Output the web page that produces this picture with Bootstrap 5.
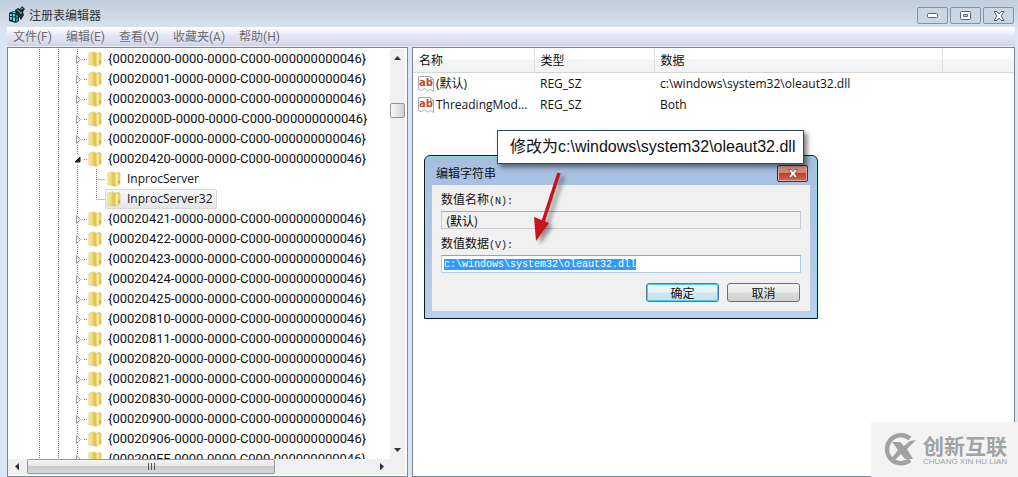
<!DOCTYPE html>
<html lang="zh-CN">
<head>
<meta charset="utf-8">
<meta name="viewport" content="width=device-width, initial-scale=1">
<title>注册表编辑器</title>
<link rel="stylesheet" href="https://cdn.jsdelivr.net/npm/bootstrap@5.3.0/dist/css/bootstrap.min.css">
<style>
  body { font: 12px/20px "Open Sans", "Noto Sans CJK SC", sans-serif; color: #111; background: #d9e6f3; }
  .app-window { padding: 0 3px 0 7px; background: linear-gradient(#c1cedb, #d6e2ed 27px, #d9e6f3 28px); }
  .titlebar { height: 27px; padding: 5px 1px 0 0; color: #333; }
  .titlebar h1 { font-size: 12px; line-height: 22px; }
  .app-icon { margin: 1px 3px 0 1px; }
  .caption-group { gap: 2px; padding-top: 2px; }
  .caption-btn { width: 31px; height: 17px; border: 1px solid #8492a6; border-radius: 2px; background: #c9d6e3; }
  .menubar { height: 20px; background: linear-gradient(#fff 0, #f4f6fc 4px, #e4e7f5 8px, #d7daec 17px, #c3c7d8 18px, #e8ebf5 19px); padding-left: 6px; gap: 14px; }
  .menubar a { color: #6d6d72; font-family: Roboto, "Noto Sans CJK SC", sans-serif; }
  .pane { background: #fff; border: 1px solid #7f868f; }
  .tree-pane { flex: 0 0 401px; padding: 1px 2px 1px 0; }
  .tree-list li { height: 20px; white-space: nowrap; }
  .tree-item { height: 20px; padding: 0 3px 0 1px; border: 1px solid transparent; border-radius: 2px; line-height: 18px; }
  .tree-item.selected { background: linear-gradient(#f8f8f8, #e6e6e6); border-color: #d9d9d9; }
  .tree-text { padding-left: 6px; }
  .tree-key { font: 13px/20px Roboto, sans-serif; }
  .vbar { flex: 0 0 15px; background: #f0f0f0; }
  .vthumb { height: 15px; margin-top: 38px; border: 1px solid #979797; border-radius: 2px; background: linear-gradient(90deg, #f8f8f8, #d0d0d3); }
  .hbar { height: 16px; background: #f0f0f0; padding-right: 15px; }
  .hthumb { width: 248px; height: 15px; border: 1px solid #979797; border-radius: 2px; background: linear-gradient(#f5f5f5, #e6e6e7 45%, #c9cacc 50%, #d8d8da); }
  .value-table { table-layout: fixed; width: 100%; }
  .value-table th { height: 24px; padding: 2px 6px 0; font-weight: 400; background: linear-gradient(#fff 45%, #f4f5f6 50%, #f1f2f4); border-right: 1px solid #dfe2e6; border-bottom: 1px solid #d5d5d5; }
  .value-table th:last-child { border-right: 0; }
  .value-table td { height: 21px; padding: 0 6px; white-space: nowrap; }
  .value-table td:first-child { padding: 0 0 0 5px; }
  .value-table tbody::before { content: ""; display: block; height: 1px; }
  .value-icon { margin-right: 2px; }
  .edit-dialog { left: 424px; top: 155px; width: 394px; padding: 0 7px 7px; border: 1px solid #101b28; border-radius: 6px 6px 0 0; background: linear-gradient(#a6bfdf, #adc5e4 60px, #b9d1ea); box-shadow: inset 0 0 0 1px #8fdcef; font: 12px/16px "Liberation Mono", "Noto Sans CJK SC", monospace; }
  .dialog-title { height: 29px; padding: 5px 2px 0 4px; }
  .dialog-title h2 { font: 12px/24px "Noto Sans CJK SC", sans-serif; }
  .dialog-close { width: 31px; height: 17px; margin-top: 4px; border: 1px solid #5a2420; border-radius: 2px; background: linear-gradient(#e9a99b, #d57e6c 45%, #bd4029 50%, #d06a50); box-shadow: inset 0 0 0 1px #e7aca0; }
  .dialog-body { height: 126px; padding: 8px 9px 0; background: #f0f0f0; }
  .dialog-body label { line-height: 16px; margin-bottom: 1px; }
  .dialog-body label span { font-size: 10px; }
  .field { height: 18px; padding: 0 2px; border: 1px solid #c9cbd0; border-radius: 0; font: 12px/16px "Noto Sans CJK SC", sans-serif; }
  .field[readonly] { background: #f0f0f0; padding-left: 4px; border-top-color: #aaa; margin-bottom: 8px; }
  .field-value { font: 10px/14px "Liberation Mono", monospace; border-color: #7aaed0 #a9cfe8 #b5cfe7; color: #111; }
  .field:focus { outline: 0; box-shadow: none; }
  .field-value::selection { background: #3399ff; color: #fff; }
  .dlg-actions { padding: 10px 1px 0 0; }
  .dlg-btn { width: 73px; height: 19px; border: 1px solid #707070; border-radius: 3px; background: linear-gradient(#f3f3f3, #ebebeb 48%, #dcdcdc 52%, #cfcfcf); font: 12px/15px "Noto Sans CJK SC", sans-serif; color: #111; }
  .dlg-btn.default { border-color: #3c7fb1; box-shadow: inset 0 0 0 1px #48d0f2; background: linear-gradient(#eef8fc, #e2f2f8 48%, #d0e6ee 52%, #cbe1e9); }
  .callout-note { left: 497px; top: 130px; padding: 0 8px 0 12px; border: 1px solid #2d4d62; background: #fff; box-shadow: 3px 3px 5px #0008; font: 16px/32px "Liberation Sans", "Noto Sans CJK SC", sans-serif; white-space: nowrap; }
  .callout-arrow { left: 530px; top: 166px; filter: drop-shadow(4px 3px 2px #0006); }
  .watermark { right: 0; bottom: 0; width: 147px; height: 55px; padding-left: 12px; gap: 5px; background: #f3f3f3; color: #a2a2a2; }
  .watermark strong { font: 700 21px/24px "Noto Sans CJK SC", sans-serif; }
  .watermark small { font: 8px/10px "Liberation Sans", sans-serif; }
</style>
</head>
<body>
<svg width="0" height="0" class="position-absolute" aria-hidden="true">
  <defs>
    <linearGradient id="gold" x2="1"><stop stop-color="#f8eea0"/><stop offset="1" stop-color="#dfc14a"/></linearGradient>
    <symbol id="folder" viewBox="0 0 14 16">
      <path d="M7 2.500l5-1q1 0 1 1V13l-5 2z" fill="#ecd565" stroke="#d8bd55" stroke-width=".6"/>
      <path d="M8.500 3l2-.5v11l-2 .8z" fill="#fff3b4"/>
      <path d="M.8 2L6 .8l2.200 1.400v13.200L5.500 14.600.8 14z" fill="url(#gold)" stroke="#dfca70" stroke-width=".6"/>
      <path d="M5.800 1.800v12.400" stroke="#dcc25a" stroke-width=".7"/>
      <path d="M12 9.500v2.500" stroke="#8a9a62" stroke-width=".8"/>
    </symbol>
    <symbol id="guides" viewBox="0 0 69 20"><path d="M31.500 0v20M50.500 0v20" stroke="#777" stroke-dasharray="1 1"/></symbol>
    <symbol id="closed" viewBox="0 0 11 20" overflow="visible"><path d="M.5 0v5M.5 16v4M7 10.500h4" stroke="#888" stroke-dasharray="1 1"/><path d="M-.5 6.500v8l4-4z" fill="#fff" stroke="#999"/></symbol>
    <symbol id="open" viewBox="0 0 11 20" overflow="visible"><path d="M.5 0v5M.5 16v4M7 10.500h4" stroke="#888" stroke-dasharray="1 1"/><path d="M3 8v5h-5z" fill="#222" stroke="#222"/></symbol>
    <symbol id="child" viewBox="0 0 28 20"><path d="M.5 0v20M19.500 0v20M19.500 10.500h9" stroke="#888" stroke-dasharray="1 1" fill="none"/></symbol>
    <symbol id="childend" viewBox="0 0 28 20"><path d="M.5 0v20M19.500 0v10M19.500 10.500h9" stroke="#888" stroke-dasharray="1 1" fill="none"/></symbol>
    <symbol id="string" viewBox="0 0 16 16">
      <path d="M.5.5h12l3 3v12l-3-2-3 1.500-3-2.500-3 2-3-1z" fill="#fff" stroke="#a4acb4"/><path d="M12.500.5v3h3" fill="#ddd" stroke="#a4acb4"/>
      <text x="1" y="10" font-family="DejaVu Sans" font-size="10" font-weight="700" fill="#c5452b">ab</text>
    </symbol>
  </defs>
</svg>

<div class="app-window vh-100 d-flex flex-column overflow-hidden position-relative">
  <header class="titlebar d-flex align-items-start">
    <svg width="18" height="18" viewBox="0 0 18 18" class="app-icon" aria-hidden="true">
      <path d="M1 7l4-2 6 1v9l-3 2-7-2z" fill="#16313a"/>
      <path d="M2 8h2v2H2zM5 8h2v2.500H5zM2 11h2v2.500H2zM5 11.500h2V15H5zM5 5.500l3 .8-1 1-3-.8z" fill="#5fdde0"/>
      <path d="M8 9l2-1v3l-2 1zM8 13l2-1v2.500L8 16z" fill="#1d9ba4"/>
      <path d="M7 4l3-2 2 1 2-3 3 3-2 3 1 3-3 5-2-3-3-3z" fill="#1b2c31"/><path d="M9 4l2 1 2 3M13 3l2-1M12 6l2 1" stroke="#88cdd0" fill="none" stroke-width=".8"/>
    </svg>
    <h1 class="m-0 flex-grow-1 fw-normal">注册表编辑器</h1>
    <div class="caption-group d-flex">
      <button class="caption-btn p-0 d-flex align-items-center justify-content-center" aria-label="最小化"><svg width="12" height="6"><rect x=".5" y=".5" width="10" height="4" rx="1" fill="#fff" stroke="#5a6270"/></svg></button>
      <button class="caption-btn p-0 d-flex align-items-center justify-content-center" aria-label="最大化"><svg width="11" height="9"><rect x=".5" y=".5" width="10" height="8" rx="1" fill="#fff" stroke="#5a6270"/><path d="M3.500 3.500h4v2h-4z" fill="#c9d6e3" stroke="#5a6270"/></svg></button>
      <button class="caption-btn p-0 d-flex align-items-center justify-content-center" aria-label="关闭"><svg width="12" height="10" viewBox="0 0 12 10"><path d="M1 .5h3L6 3 8 .5h3L8 5l3 4.500H8L6 7 4 9.500H1L4 5z" fill="#fff" stroke="#5a6270"/></svg></button>
    </div>
  </header>

  <nav class="menubar d-flex">
    <a class="text-decoration-none" href="#">文件(F)</a>
    <a class="text-decoration-none" href="#">编辑(E)</a>
    <a class="text-decoration-none" href="#">查看(V)</a>
    <a class="text-decoration-none" href="#">收藏夹(A)</a>
    <a class="text-decoration-none" href="#">帮助(H)</a>
  </nav>

  <main class="d-flex flex-grow-1 gap-1 overflow-hidden">
    <section class="pane tree-pane d-flex flex-column overflow-hidden">
      <div class="d-flex flex-grow-1 overflow-hidden">
        <ul class="tree-list list-unstyled m-0 flex-grow-1 overflow-hidden" id="tree"></ul>
        <div class="vbar d-flex flex-column">
          <svg width="15" height="16"><path d="M4 11l3.500-4L11 11z" fill="#333"/></svg>
          <div class="vthumb"></div>
          <svg width="15" height="16" class="mt-auto"><path d="M4 5l3.500 4L11 5z" fill="#333"/></svg>
        </div>
      </div>
      <div class="hbar d-flex">
        <svg width="19" height="16"><path d="M11 4L7 7.500l4 4z" fill="#333"/></svg>
        <div class="hthumb d-flex align-items-center justify-content-center"><svg width="9" height="7"><path d="M1.500 0v7M4.500 0v7M7.500 0v7" stroke="#555"/></svg></div>
        <svg width="15" height="16" class="ms-auto"><path d="M5 4l4 3.500-4 4z" fill="#333"/></svg>
      </div>
    </section>

    <section class="pane flex-grow-1 overflow-hidden">
      <table class="value-table">
        <colgroup><col width="121"><col width="120"><col width="288"><col></colgroup>
        <thead><tr><th>名称</th><th>类型</th><th>数据</th><th></th></tr></thead>
        <tbody>
          <tr><td><div class="d-flex align-items-center"><svg width="16" height="16" class="value-icon"><use href="#string"/></svg>(默认)</div></td><td>REG_SZ</td><td>c:\windows\system32\oleaut32.dll</td><td></td></tr>
          <tr><td><div class="d-flex align-items-center"><svg width="16" height="16" class="value-icon"><use href="#string"/></svg>ThreadingMod...</div></td><td>REG_SZ</td><td>Both</td><td></td></tr>
        </tbody>
      </table>
    </section>
  </main>

  <form class="edit-dialog position-absolute" onsubmit="return false">
    <div class="dialog-title d-flex justify-content-between">
      <h2 class="m-0">编辑字符串</h2>
      <button type="button" class="dialog-close p-0 d-flex align-items-center justify-content-center" aria-label="关闭"><svg width="12" height="9" viewBox="0 0 12 10"><path d="M1 .5h3L6 3 8 .5h3L8 5l3 4.500H8L6 7 4 9.500H1L4 5z" fill="#fff" stroke="#6b3a38" stroke-width=".7"/></svg></button>
    </div>
    <div class="dialog-body">
      <label class="d-block" for="vname">数值名称<span>(N):</span></label>
      <input class="field w-100 d-block" id="vname" value="(默认)" readonly>
      <label class="d-block" for="vdata">数值数据<span>(V):</span></label>
      <input class="field field-value w-100 d-block" id="vdata" value="c:\windows\system32\oleaut32.dll" spellcheck="false">
      <div class="dlg-actions d-flex justify-content-end gap-2">
        <button class="dlg-btn default p-0">确定</button>
        <button type="button" class="dlg-btn p-0">取消</button>
      </div>
    </div>
  </form>

  <div class="callout-note position-absolute">修改为c:\windows\system32\oleaut32.dll</div>
  <svg class="callout-arrow position-absolute" width="40" height="80" aria-hidden="true">
    <path d="M29 7L13 56" stroke="#c8141a" stroke-width="3.500"/><path d="M4 51l15 6-13 18z" fill="#c8141a"/>
  </svg>

  <div class="watermark position-absolute d-flex align-items-center">
    <svg width="35" height="34" viewBox="0 0 35 34" aria-hidden="true" fill="none">
      <path d="M27 5.500A14 14 0 1 0 27 27" stroke="#a2a2a2" stroke-width="4.500"/>
      <path d="M9 9h8l4 4 6-5 6-1-9 9 6 10h-8l-4-5-5 5H8l7-9z" fill="#a2a2a2"/>
    </svg>
    <div class="d-flex flex-column"><strong>创新互联</strong><small>CHUANG XIN HU LIAN</small></div>
  </div>
</div>

<script src="https://cdn.jsdelivr.net/npm/bootstrap@5.3.0/dist/js/bootstrap.bundle.min.js"></script>
<script>
  const keys = ['00020000','00020001','00020003','0002000D','0002000F','00020420','>InprocServer','>InprocServer32','00020421','00020422','00020423','00020424','00020425','00020810','00020811','00020820','00020821','00020830','00020900','00020906','000209FF'];
  const icon = (id, w, h) => `<svg class="flex-shrink-0 overflow-visible" width="${w}" height="${h}"><use href="#${id}"/></svg>`;
  document.getElementById('tree').innerHTML = keys.map(k => {
    const child = k[0] === '>', last = k.endsWith('Server32');
    const branch = child ? icon(last ? 'childend' : 'child', 28, 20) : icon(k === '00020420' ? 'open' : 'closed', 11, 20);
    const label = child ? k.slice(1) : `{${k}-0000-0000-C000-000000000046}`;
    return `<li class="d-flex">${icon('guides', 69, 20)}${branch}<span class="${child ? 'tree-item' + (last ? ' selected' : '') : ''} d-flex align-items-center">${icon('folder', 14, 16)}<span class="tree-text${child ? '' : ' tree-key'}">${label}</span></span></li>`;
  }).join('');
  document.getElementById('vdata').focus();
  document.getElementById('vdata').select();
</script>
</body>
</html>
